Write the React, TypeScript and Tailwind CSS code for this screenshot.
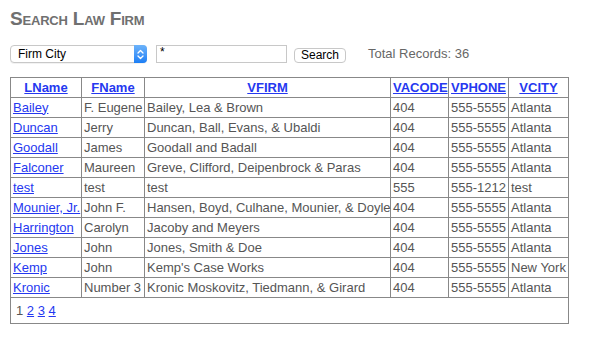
import React from "react";

const rows = [
  ["Bailey", "F. Eugene", "Bailey, Lea & Brown", "404", "555-5555", "Atlanta"],
  ["Duncan", "Jerry", "Duncan, Ball, Evans, & Ubaldi", "404", "555-5555", "Atlanta"],
  ["Goodall", "James", "Goodall and Badall", "404", "555-5555", "Atlanta"],
  ["Falconer", "Maureen", "Greve, Clifford, Deipenbrock & Paras", "404", "555-5555", "Atlanta"],
  ["test", "test", "test", "555", "555-1212", "test"],
  ["Mounier, Jr.", "John F.", "Hansen, Boyd, Culhane, Mounier, & Doyle", "404", "555-5555", "Atlanta"],
  ["Harrington", "Carolyn", "Jacoby and Meyers", "404", "555-5555", "Atlanta"],
  ["Jones", "John", "Jones, Smith & Doe", "404", "555-5555", "Atlanta"],
  ["Kemp", "John", "Kemp's Case Works", "404", "555-5555", "New York"],
  ["Kronic", "Number 3", "Kronic Moskovitz, Tiedmann, & Girard", "404", "555-5555", "Atlanta"],
];

const heads = ["LName", "FName", "VFIRM", "VACODE", "VPHONE", "VCITY"];
const widths = ["w-[71px]", "w-[63px]", "w-[246px]", "w-[58px]", "w-[60px]", "w-[60px]"];

export default function App() {
  return (
    <div className="min-h-[341px] w-[614px] bg-white pl-[10px] pt-[8px] font-['Liberation_Sans',Arial,sans-serif] text-[13px] text-[#555]">
      <h1 className="text-[19px] font-bold leading-[22px] tracking-[-0.2px] text-[#707070] [font-variant:small-caps]">
        Search Law Firm
      </h1>
      <div className="mt-[15px] flex h-[18px] items-center">
        <div className="relative flex h-[18px] w-[137px] items-center rounded-[4px] border border-[#c8c8c8] bg-white pl-[7px] text-[12px] text-black shadow-[0_1px_0_rgba(0,0,0,0.05)]">
          Firm City
          <div className="absolute right-[-1px] top-[-1px] flex h-[18px] w-[13px] items-center justify-center rounded-r-[4px] bg-gradient-to-b from-[#6cb3fa] to-[#1a7ef5]">
            <svg width="7" height="11" viewBox="0 0 7 11" fill="none" stroke="white" strokeWidth="1.3" strokeLinecap="round" strokeLinejoin="round">
              <path d="M1 4 L3.5 1.5 L6 4" />
              <path d="M1 7 L3.5 9.5 L6 7" />
            </svg>
          </div>
        </div>
        <div className="ml-[9px] flex h-[18px] w-[131px] items-start border border-[#c8c8c8] bg-white pl-[3px] text-[12px] leading-[12px] text-black">
          *
        </div>
        <div className="ml-[7px] mt-[2px] flex h-[15px] w-[52px] items-center justify-center rounded-[4px] border border-[#c8c8c8] bg-white text-[12px] text-black">
          Search
        </div>
        <div className="ml-[22px] text-[13px] text-[#666]">Total Records: 36</div>
      </div>
      <table className="mt-[14px] w-[558px] table-fixed border-collapse border border-[#888]">
        <thead>
          <tr className="h-[20px]">
            {heads.map((h, i) => (
              <th key={h} className={`${widths[i]} border border-[#888] px-[2px] py-0 text-center text-[13px] font-bold leading-[16px]`}>
                <a className="text-[#2538f0] underline">{h}</a>
              </th>
            ))}
          </tr>
        </thead>
        <tbody>
          {rows.map((r) => (
            <tr key={r[0]} className="h-[20px]">
              {r.map((c, i) => (
                <td key={i} className="whitespace-nowrap border border-[#888] px-[2px] py-0 text-left leading-[16px]">
                  {i === 0 ? <a className="text-[#2538f0] underline">{c}</a> : c}
                </td>
              ))}
            </tr>
          ))}
          <tr className="h-[26px]">
            <td colSpan={6} className="border border-[#888] px-[5px] pt-[1px] leading-[16px]">
              <span>1</span>{" "}
              <a className="text-[#2538f0] underline">2</a>{" "}
              <a className="text-[#2538f0] underline">3</a>{" "}
              <a className="text-[#2538f0] underline">4</a>
            </td>
          </tr>
        </tbody>
      </table>
    </div>
  );
}
